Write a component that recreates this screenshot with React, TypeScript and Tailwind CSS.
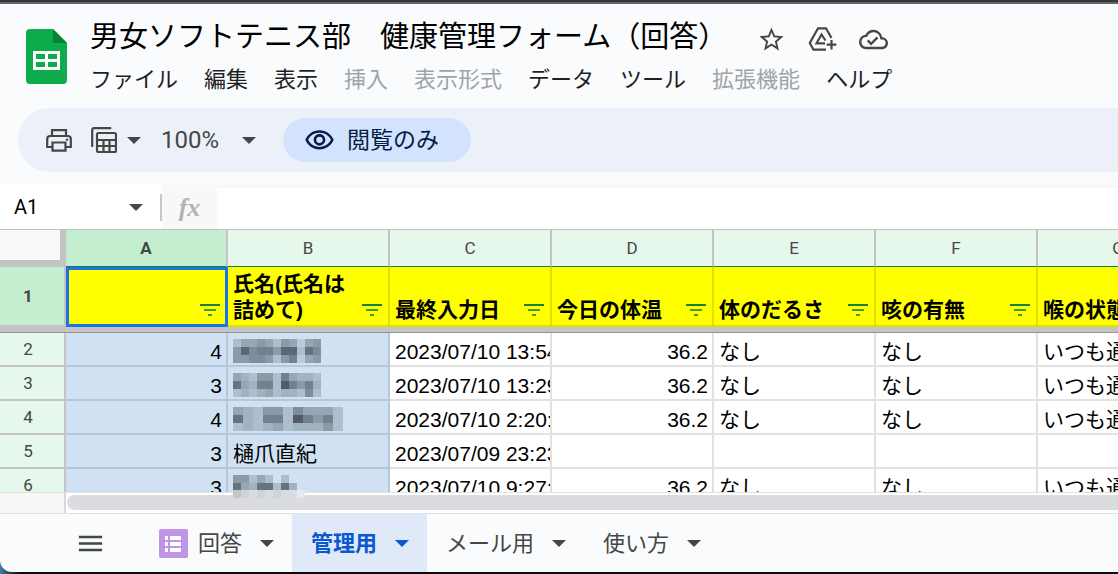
import React, { useState } from 'react';
import { MdMenu, MdOutlineCloudDone, MdOutlineVisibility, MdStarBorder } from 'react-icons/md';

interface MenuItem {
  label: string;
  disabled?: boolean;
}

interface Row {
  id: number;
  count: string;
  name?: string;
  mosaic?: string[];
  mosaicCell?: number;
  date: string;
  temp: string;
  fatigue: string;
  cough: string;
  throat: string;
}

const menuItems: MenuItem[] = [
  { label: 'ファイル' },
  { label: '編集' },
  { label: '表示' },
  { label: '挿入', disabled: true },
  { label: '表示形式', disabled: true },
  { label: 'データ' },
  { label: 'ツール' },
  { label: '拡張機能', disabled: true },
  { label: 'ヘルプ' },
];

const columns = ['A', 'B', 'C', 'D', 'E', 'F', 'G'];

const headers = ['', '氏名(氏名は詰めて)', '最終入力日', '今日の体温', '体のだるさ', '咳の有無', '喉の状態'];

const rows: Row[] = [
  { id: 2, count: '4', mosaic: ['13343143034', '48566488175', '44554146034'], date: '2023/07/10 13:54:10', temp: '36.2', fatigue: 'なし', cough: 'なし', throat: 'いつも通り' },
  { id: 3, count: '3', mosaic: ['32144163221', '73266196462', '12123122151'], date: '2023/07/10 13:29:10', temp: '36.2', fatigue: 'なし', cough: 'なし', throat: 'いつも通り' },
  { id: 4, count: '4', mosaic: ['32144153331', '72166196461', '12123122241'], mosaicCell: 10, date: '2023/07/10 2:20:10', temp: '36.2', fatigue: 'なし', cough: 'なし', throat: 'いつも通り' },
  { id: 5, count: '3', name: '樋爪直紀', date: '2023/07/09 23:23:10', temp: '', fatigue: '', cough: '', throat: '' },
  { id: 6, count: '3', mosaic: ['44131.1.', '73277172', '........'], date: '2023/07/10 9:27:10', temp: '36.2', fatigue: 'なし', cough: 'なし', throat: 'いつも通り' },
];

const Caret: React.FC<{ className?: string }> = ({ className = '' }) => (
  <svg width="14" height="7" viewBox="0 0 14 7" className={`shrink-0 ${className}`} aria-hidden="true">
    <path d="M0 0h14L7 7z" fill="currentColor" />
  </svg>
);

const SheetsLogo = () => (
  <svg width="41" height="55" viewBox="0 0 41 55" className="mt-[14px] shrink-0" aria-hidden="true">
    <path d="M4 0h23l14 14v37a4 4 0 0 1-4 4H4a4 4 0 0 1-4-4V4a4 4 0 0 1 4-4z" fill="#0cac4b" />
    <path d="M27 0l14 14H27z" fill="#07832f" />
    <path fillRule="evenodd" fill="#fff" d="M7 22h27v19H7zM10 25v5h9v-5zM22 25v5h9v-5zM10 33v5h9v-5zM22 33v5h9v-5z" />
  </svg>
);

const DriveAddIcon = () => (
  <svg width="29" height="27" viewBox="0 0 29 27" fill="none" stroke="currentColor" strokeWidth="2.2" aria-hidden="true">
    <path d="M23.500 12L18 2.300H10L1.800 17l3.700 6.700h12.500" />
    <path d="M17.500 14.500L13.500 8.500 8.500 17.300h8.500" />
    <path d="M23.500 14v9.500M18.700 18.700h9.600" />
  </svg>
);

const PrintIcon = () => (
  <svg width="26" height="23" viewBox="0 0 26 23" fill="none" stroke="currentColor" strokeWidth="2.200" aria-hidden="true">
    <path d="M6 7V1.200h14V7" />
    <path d="M6.500 18H1.200v-8a3 3 0 0 1 3-3h17.600a3 3 0 0 1 3 3v8h-5.300" />
    <path d="M6.500 13.500h13v8.200h-13z" />
    <circle cx="21" cy="10.800" r="1.200" fill="currentColor" stroke="none" />
  </svg>
);

const FilterViewIcon = () => (
  <svg width="26" height="26" viewBox="0 0 26 26" fill="none" stroke="currentColor" strokeWidth="2.200" aria-hidden="true">
    <path d="M1.200 20V3a2 2 0 0 1 2-1.800h17" />
    <rect x="6" y="6" width="19" height="19" rx="1.500" />
    <path d="M6 13h19M6 19h19M12.500 13v12M18.500 13v12" />
  </svg>
);

const FilterIcon = () => (
  <svg width="20" height="12" viewBox="0 0 20 12" aria-hidden="true">
    <path d="M0 0h20v2H0z" fill="#188038" />
    <path d="M4 5h12v2H4zM8 10h4v2H8z" fill="#188038" fillOpacity="0.8" />
  </svg>
);

const FormIcon = () => (
  <svg width="29" height="29" viewBox="0 0 29 29" aria-hidden="true">
    <rect width="29" height="29" rx="2" fill="#c095e8" />
    <path d="M6 7h3v4H6zM11 7h11v4H11zM6 13h3v4H6zM11 13h11v4H11zM6 19h3v4H6zM11 19h11v4H11z" fill="#fff" />
  </svg>
);

// Pixelated block that hides a name; each digit is the darkness of one tile
const Mosaic: React.FC<{ tiles: string[]; cell?: number }> = ({ tiles, cell = 8 }) => (
  <svg
    width={tiles[0].length * cell}
    height={tiles.length * 8}
    shapeRendering="crispEdges"
    className="block"
    aria-hidden="true"
  >
    {tiles.map((line, y) =>
      line.split('').map((tile, x) =>
        tile === '.' ? null : (
          <rect key={`${x}-${y}`} x={x * cell} y={y * 8} width={cell} height="8" fill="#3c444f" fillOpacity={0.14 + Number(tile) * 0.08} />
        )
      )
    )}
  </svg>
);

const App: React.FC = () => {
  const [cellName, setCellName] = useState('A1');
  const [formula, setFormula] = useState('');

  const tabs = [
    { label: '回答', form: true },
    { label: '管理用', active: true },
    { label: 'メール用' },
    { label: '使い方' },
  ];

  const cell = 'h-[34px] border-r-2 border-b-2 align-bottom overflow-hidden whitespace-nowrap';
  const plain = `${cell} border-[#e1e1e1] bg-white pl-[5px]`;
  const shaded = `${cell} border-[#b5c6d8] bg-[#d0e1f3]`;

  return (
    <div className="h-screen flex flex-col overflow-hidden bg-linear-to-r from-[#3f7f9c] to-[#0b0b0f] to-[20px] border-t-2 border-[#35353a] pb-[2px] font-['Liberation_Sans','Noto_Sans_CJK_JP',sans-serif]">
      <div className="flex-1 min-h-0 flex flex-col overflow-hidden rounded-bl-xl border-t-2 border-[#626267] bg-[#f9fbfd]">
        <header className="flex pt-[11px] pl-[26px] pb-[9px]">
          <SheetsLogo />
          <div className="ml-[23px]">
            <div className="flex items-center h-11 text-[#444746]">
              <h1 className="text-[29px] leading-[44px] whitespace-nowrap text-black">男女ソフトテニス部　健康管理フォーム（回答）</h1>
              <div className="flex items-center gap-[22px] ml-[30px] pt-1">
                <button aria-label="スター"><MdStarBorder size={29} /></button>
                <button aria-label="ドライブに追加"><DriveAddIcon /></button>
                <button aria-label="保存状態"><MdOutlineCloudDone size={29} /></button>
              </div>
            </div>
            <nav className="flex items-center gap-[26px] h-10 text-[22px] whitespace-nowrap">
              {menuItems.map((item) => (
                <button key={item.label} disabled={item.disabled} className="text-[#1f1f1f] disabled:text-[#a0a4a9]">
                  {item.label}
                </button>
              ))}
            </nav>
          </div>
        </header>

        {/* Toolbar */}
        <div className="flex items-center h-16 shrink-0 ml-[18px] pl-7 rounded-l-full bg-[#ecf0f9] text-[#444746]">
          <button aria-label="印刷"><PrintIcon /></button>
          <button aria-label="フィルタ表示" className="flex items-center gap-[10px] ml-[19px]">
            <FilterViewIcon />
            <Caret />
          </button>
          <label className="relative flex items-center ml-5">
            <select aria-label="ズーム" className="appearance-none w-[95px] bg-transparent font-[Roboto] text-2xl">
              <option>100%</option>
            </select>
            <Caret className="absolute right-0 pointer-events-none" />
          </label>
          <button className="flex items-center gap-3 h-11 ml-[27px] pl-[21px] pr-8 rounded-full bg-[#d3e3fd] text-[#041e49] text-[23px]">
            <MdOutlineVisibility size={31} />
            閲覧のみ
          </button>
        </div>

        {/* Name box and formula bar */}
        <div className="flex h-[45px] shrink-0 mt-[13px] border-b border-[#c0c0c0] bg-white">
          <div className="flex items-center w-[162px] pl-[14px]">
            <input
              aria-label="名前ボックス"
              value={cellName}
              onChange={(e) => setCellName(e.target.value)}
              className="w-[115px] font-[Roboto] text-xl text-black outline-none"
            />
            <button aria-label="名前付き範囲" className="text-[#444746]"><Caret /></button>
            <span className="ml-auto w-[2px] h-[27px] bg-[#c7c7c7]" />
          </div>
          <label htmlFor="formula" className="flex items-center justify-center w-[55px] bg-[#f8f8f8] font-['Liberation_Serif',serif] italic font-bold text-[26px] text-[#b3b3b3]">
            fx
          </label>
          <input
            id="formula"
            value={formula}
            onChange={(e) => setFormula(e.target.value)}
            className="flex-1 min-w-0 px-2 border-t-3 border-[#f8f8f8] outline-none"
          />
        </div>

        {/* Grid */}
        <div className="flex-1 min-h-0 overflow-hidden bg-white">
          <table className="table-fixed w-[1200px] border-separate border-spacing-0 text-[21px] leading-[26px] text-black">
            <colgroup>
              <col className="w-[66px]" />
              {columns.map((c) => <col key={c} className="w-[162px]" />)}
            </colgroup>
            <thead>
              <tr className="font-[Roboto] text-[17px] text-[#444746]">
                <td className="h-[37px] border-r-6 border-b-7 border-[#c4c4c4] bg-[#f8f9fa]" />
                {columns.map((c) => (
                  <th
                    key={c}
                    scope="col"
                    className={`h-[37px] p-0 border-r-2 border-b border-r-[#c4c4c4] border-b-[#188038] ${c === 'A' ? 'bg-[#c4eed0] font-bold' : 'bg-[#e6f7ec] font-normal'}`}
                  >
                    {c}
                  </th>
                ))}
              </tr>
              <tr>
                <th scope="row" className="h-[60px] py-0 pl-0 pr-2 border-r-2 border-b-2 border-[#c4c4c4] bg-[#c4eed0] font-[Roboto] text-[17px] font-bold text-[#444746]">1</th>
                {headers.map((text, i) => (
                  <th
                    key={columns[i]}
                    scope="col"
                    className={`h-[60px] py-0 pl-[5px] pr-[6px] border-r-2 border-b-2 border-[#e0e000] bg-[#ffff00] align-bottom text-left font-bold ${i === 0 ? 'outline-3 -outline-offset-3 outline-[#1a73e8]' : ''}`}
                  >
                    <div className="flex items-end justify-between pb-[2px]">
                      <span className="w-[126px]">{text}</span>
                      <button aria-label="フィルタ" className="pb-[7px]"><FilterIcon /></button>
                    </div>
                  </th>
                ))}
              </tr>
            </thead>
            <tbody>
              <tr aria-hidden="true">
                <td colSpan={8} className="h-[6px] p-0 border-b border-[#90959b] bg-[#c4c4c4]" />
              </tr>
              {rows.map((row) => (
                <tr key={row.id}>
                  <th scope="row" className="h-[34px] py-0 pl-0 pr-2 border-r-2 border-b-2 border-[#c4c4c4] bg-[#e6f7ec] font-[Roboto] text-[17px] font-normal text-[#444746]">{row.id}</th>
                  <td className={`${shaded} pr-1 text-right`}>{row.count}</td>
                  <td className={`${shaded} pl-[5px]`}>
                    {row.mosaic ? <div className="pb-[2px]"><Mosaic tiles={row.mosaic} cell={row.mosaicCell} /></div> : row.name}
                  </td>
                  <td className={plain}>{row.date}</td>
                  <td className={`${plain} pr-1 text-right`}>{row.temp}</td>
                  <td className={plain}>{row.fatigue}</td>
                  <td className={plain}>{row.cough}</td>
                  <td className={plain}>{row.throat}</td>
                </tr>
              ))}
            </tbody>
          </table>
        </div>

        {/* Horizontal scrollbar */}
        <div className="relative flex h-[22px] shrink-0 border-y border-[#e1e1e1] bg-white">
          <div className="w-[66px] shrink-0 border-r-2 border-[#d9d9d9] bg-[#f8f8f8]" />
          <div className="flex-1 h-[15px] mt-[2px] ml-px rounded-l-full bg-[#dadce0]" />
          <svg width="72" height="8" className="absolute -top-[3px] left-[233px]" shapeRendering="crispEdges" aria-hidden="true">
            <path d="M0 0h8v8H0z" fill="#c3c5c8" />
            <path d="M8 0h8v8H8zM24 0h8v8h-8zM40 0h8v8h-8z" fill="#cfd4da" />
            <path d="M16 0h8v8h-8zM32 0h8v8h-8zM48 0h16v8H48z" fill="#d8dde3" />
            <path d="M64 0h8v8h-8z" fill="#e6e9ee" />
          </svg>
        </div>

        {/* Sheet tabs */}
        <footer className="flex h-[58px] shrink-0 pl-[75px] text-[#444746]">
          <button aria-label="すべてのシート" className="mr-[39px]"><MdMenu size={31} /></button>
          {tabs.map((tab) => (
            <button
              key={tab.label}
              className={`flex items-center gap-[18px] pr-[18px] text-[22px] whitespace-nowrap ${tab.form ? 'pl-[14px]' : 'pl-[19px]'} ${tab.active ? 'bg-[#dfe9f8] text-[#0b57d0] font-bold' : ''}`}
            >
              <span className="flex items-center gap-[10px]">
                {tab.form && <FormIcon />}
                {tab.label}
              </span>
              <Caret />
            </button>
          ))}
        </footer>
      </div>
    </div>
  );
};

export default App;
